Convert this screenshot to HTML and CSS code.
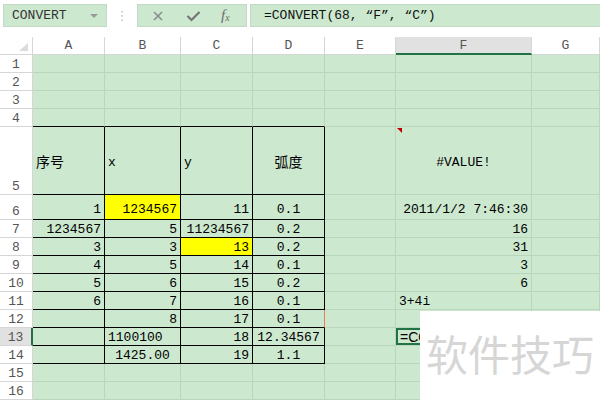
FILE: index.html
```html
<!DOCTYPE html>
<html lang="zh-CN">
<head>
    <meta charset="UTF-8">
    <meta name="viewport" content="width=device-width, initial-scale=1.0">
    <title>CONVERT</title>
    <link rel="stylesheet" href="styles.css">
</head>
<body>
    <!-- Formula bar -->
    <div class="toolbar">
        <div class="namebox">
            <span>CONVERT</span>
            <span class="drop"></span>
        </div>
        <div class="sep">⋮</div>
        <div class="fxbox">
            <svg class="icon" width="12" height="12" viewBox="0 0 12 12">
                <path d="M2 2 L10 10 M10 2 L2 10" stroke="#8c8c8c" stroke-width="1.6" fill="none"/>
            </svg>
            <svg class="icon" width="15" height="12" viewBox="0 0 15 12">
                <path d="M1.5 6 L5.5 10 L13.5 2" stroke="#757575" stroke-width="2.2" fill="none"/>
            </svg>
            <span class="fx">f<sub>x</sub></span>
        </div>
        <div class="formula">=CONVERT(68, “F”, “C”)</div>
    </div>

    <!-- Sheet -->
    <div class="sheet">
        <div class="row hdr">
            <div class="corner"><span class="tri"></span></div>
            <div class="ch">A</div>
            <div class="ch">B</div>
            <div class="ch">C</div>
            <div class="ch">D</div>
            <div class="ch">E</div>
            <div class="ch active">F</div>
            <div class="ch">G</div>
        </div>

        <div class="row">
            <div class="rh">1</div>
            <div class="c"></div><div class="c"></div><div class="c"></div><div class="c"></div>
            <div class="c"></div><div class="c"></div><div class="c"></div>
        </div>
        <div class="row">
            <div class="rh">2</div>
            <div class="c"></div><div class="c"></div><div class="c"></div><div class="c"></div>
            <div class="c"></div><div class="c"></div><div class="c"></div>
        </div>
        <div class="row">
            <div class="rh">3</div>
            <div class="c"></div><div class="c"></div><div class="c"></div><div class="c"></div>
            <div class="c"></div><div class="c"></div><div class="c"></div>
        </div>
        <div class="row">
            <div class="rh">4</div>
            <div class="c tt"></div><div class="c tt"></div><div class="c tt"></div><div class="c tt"></div>
            <div class="c"></div><div class="c"></div><div class="c"></div>
        </div>

        <div class="row tall">
            <div class="rh">5</div>
            <div class="c t zh">序号</div>
            <div class="c t">x</div>
            <div class="c t">y</div>
            <div class="c t m zh">弧度</div>
            <div class="c"></div>
            <div class="c m note">#VALUE!<span class="flag"></span></div>
            <div class="c"></div>
        </div>

        <div class="row mid">
            <div class="rh">6</div>
            <div class="c t r">1</div>
            <div class="c t r hi">1234567</div>
            <div class="c t r">11</div>
            <div class="c t m">0.1</div>
            <div class="c"></div>
            <div class="c r">2011/1/2 7:46:30</div>
            <div class="c"></div>
        </div>

        <div class="row">
            <div class="rh">7</div>
            <div class="c t r">1234567</div>
            <div class="c t r">5</div>
            <div class="c t r">11234567</div>
            <div class="c t m">0.2</div>
            <div class="c"></div>
            <div class="c r">16</div>
            <div class="c"></div>
        </div>
        <div class="row">
            <div class="rh">8</div>
            <div class="c t r">3</div>
            <div class="c t r">3</div>
            <div class="c t r hi">13</div>
            <div class="c t m">0.2</div>
            <div class="c"></div>
            <div class="c r">31</div>
            <div class="c"></div>
        </div>
        <div class="row">
            <div class="rh">9</div>
            <div class="c t r">4</div>
            <div class="c t r">5</div>
            <div class="c t r">14</div>
            <div class="c t m">0.1</div>
            <div class="c"></div>
            <div class="c r">3</div>
            <div class="c"></div>
        </div>
        <div class="row">
            <div class="rh">10</div>
            <div class="c t r">5</div>
            <div class="c t r">6</div>
            <div class="c t r">15</div>
            <div class="c t m">0.2</div>
            <div class="c"></div>
            <div class="c r">6</div>
            <div class="c"></div>
        </div>
        <div class="row">
            <div class="rh">11</div>
            <div class="c t r">6</div>
            <div class="c t r">7</div>
            <div class="c t r">16</div>
            <div class="c t m">0.1</div>
            <div class="c"></div>
            <div class="c">3+4i</div>
            <div class="c"></div>
        </div>
        <div class="row">
            <div class="rh">12</div>
            <div class="c t"></div>
            <div class="c t r">8</div>
            <div class="c t r">17</div>
            <div class="c t m trace">0.1</div>
            <div class="c"></div>
            <div class="c"></div>
            <div class="c"></div>
        </div>
        <div class="row">
            <div class="rh active">13</div>
            <div class="c t"></div>
            <div class="c t">1100100</div>
            <div class="c t r">18</div>
            <div class="c t m">12.34567</div>
            <div class="c"></div>
            <div class="c sel">=CONVERT(68,"F","C")</div>
            <div class="c"></div>
        </div>
        <div class="row">
            <div class="rh">14</div>
            <div class="c t"></div>
            <div class="c t m">1425.00</div>
            <div class="c t r">19</div>
            <div class="c t m">1.1</div>
            <div class="c"></div>
            <div class="c"></div>
            <div class="c"></div>
        </div>
        <div class="row">
            <div class="rh">15</div>
            <div class="c"></div><div class="c"></div><div class="c"></div><div class="c"></div>
            <div class="c"></div><div class="c"></div><div class="c"></div>
        </div>
        <div class="row">
            <div class="rh">16</div>
            <div class="c"></div><div class="c"></div><div class="c"></div><div class="c"></div>
            <div class="c"></div><div class="c"></div><div class="c"></div>
        </div>
    </div>

    <div class="watermark">软件技巧</div>
</body>
</html>
```

FILE: styles.css
```css
:root {
    --cell-bg: #cce8cf;
    --grid-line: #b9d6bc;
    --head-line: #d6d6d6;
    --head-text: #555;
    --select-green: #217346;
    --select-bg: #e1e1e1;
}

* {
    margin: 0;
    padding: 0;
    box-sizing: border-box;
}

body {
    width: 600px;
    height: 400px;
    overflow: hidden;
    background-color: white;
    font-family: 'Liberation Mono', 'Noto Sans CJK SC', monospace;
    font-size: 13px;
    color: #000;
    position: relative;
}

/* Formula bar */
.toolbar {
    height: 37px;
    display: flex;
    align-items: flex-start;
    padding: 4px 0 0 3px;
}

.namebox {
    width: 104px;
    height: 23px;
    background-color: var(--cell-bg);
    border: 1px solid #c4d8c6;
    display: flex;
    align-items: center;
    justify-content: space-between;
    padding: 0 8px 0 8px;
    color: #333;
}

.drop {
    width: 0;
    height: 0;
    border-left: 4px solid transparent;
    border-right: 4px solid transparent;
    border-top: 4px solid #9a9a9a;
}

.sep {
    width: 30px;
    height: 23px;
    display: flex;
    align-items: center;
    justify-content: center;
    color: #c2c2c2;
    font-family: 'DejaVu Sans', sans-serif;
    font-size: 13px;
}

.fxbox {
    width: 110px;
    height: 23px;
    background-color: var(--cell-bg);
    border: 1px solid #c4d8c6;
    display: flex;
    align-items: center;
    padding-left: 14px;
    gap: 22px;
}

.fx {
    font-family: 'Liberation Serif', serif;
    font-style: italic;
    font-size: 15px;
    color: #6e6e6e;
    margin-left: -2px;
}

.fx sub {
    font-size: 10px;
    vertical-align: -1px;
}

.formula {
    flex: 1;
    height: 23px;
    margin-left: 3px;
    margin-right: -2px;
    background-color: var(--cell-bg);
    border: 1px solid #c4d8c6;
    display: flex;
    align-items: center;
    padding-left: 13px;
    color: #111;
}

/* Sheet grid */
.row {
    display: grid;
    grid-template-columns: 33px 72px 76px 72px 72px 71px 136px 68px;
    height: 18px;
}

.row.tall {
    height: 68px;
}

.row.mid {
    height: 25px;
}

.corner,
.ch,
.rh {
    background-color: white;
    color: var(--head-text);
    display: flex;
    justify-content: center;
    align-items: flex-end;
    line-height: 10px;
    padding-bottom: 3px;
}

.corner {
    border-right: 1px solid var(--head-line);
    border-bottom: 1px solid var(--head-line);
    padding: 0 0 3px 19px;
    justify-content: flex-start;
}

.tri {
    width: 0;
    height: 0;
    border-left: 9px solid transparent;
    border-bottom: 8px solid #dcdcdc;
}

.ch {
    border-right: 1px solid var(--head-line);
    border-bottom: 1px solid var(--head-line);
}

.ch.active {
    background-color: var(--select-bg);
    border-bottom: 2px solid var(--select-green);
    padding-bottom: 2px;
}

.rh {
    border-right: 1px solid var(--head-line);
    border-bottom: 1px solid var(--head-line);
    padding-bottom: 2px;
}

.rh.active {
    background-color: var(--select-bg);
    border-right: 2px solid var(--select-green);
}

.c {
    background-color: var(--cell-bg);
    border-right: 1px solid var(--grid-line);
    border-bottom: 1px solid var(--grid-line);
    display: flex;
    align-items: flex-end;
    padding: 0 3px 2px 3px;
    line-height: 10px;
    white-space: nowrap;
    overflow: hidden;
}

.row.mid .c {
    padding-bottom: 4px;
}

.row.tall .c {
    align-items: center;
    padding-top: 4px;
    padding-bottom: 0;
}

.c.r {
    justify-content: flex-end;
}

.c.m {
    justify-content: center;
}

.c.t {
    border-right-color: #000;
    border-bottom-color: #000;
}

.c.tt {
    border-bottom-color: #000;
}

.c.hi {
    background-color: #ffff00;
}

.c.trace {
    border-right-color: #ec7a5c;
}

.zh {
    font-size: 14px;
}

.note {
    position: relative;
    overflow: visible;
}

.flag {
    position: absolute;
    left: 1px;
    top: 1px;
    width: 0;
    height: 0;
    border-top: 5px solid #c00000;
    border-left: 5px solid transparent;
}

.sel {
    box-shadow: inset 0 0 0 2px var(--select-green);
    font-family: 'Liberation Sans', sans-serif;
    font-size: 14px;
    padding-left: 4px;
    line-height: 12px;
}

.watermark {
    position: absolute;
    left: 420px;
    top: 311px;
    right: 0;
    bottom: 0;
    background-color: white;
    color: #d6d6d6;
    font-family: 'Noto Sans CJK SC', sans-serif;
    font-size: 42px;
    line-height: 1;
    padding: 21px 0 0 6px;
    white-space: nowrap;
}
```
